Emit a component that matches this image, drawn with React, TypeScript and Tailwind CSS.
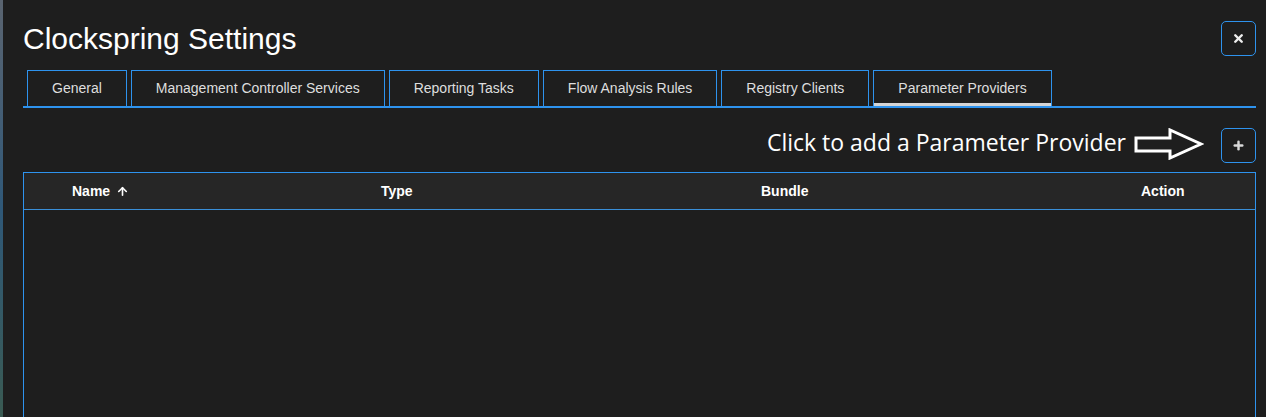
import React from 'react';
import { X, Plus, ArrowUp } from 'lucide-react';

const tabs = [
  'General',
  'Management Controller Services',
  'Reporting Tasks',
  'Flow Analysis Rules',
  'Registry Clients',
  'Parameter Providers',
];

const App: React.FC = () => {
  const [active, setActive] = React.useState('Parameter Providers');

  return (
    <div
      className="flex h-[417px] w-[1266px] overflow-hidden bg-[#1e1e1e]"
      style={{ fontFamily: '"Liberation Sans", Arial, sans-serif' }}
    >
      {/* blurred canvas peeking at the left edge */}
      <div className="w-[3px] shrink-0 bg-gradient-to-b from-[#5a6470] via-[#2f5878] to-[#3a5a52]" />

      <div className="flex flex-1 flex-col">
        <div className="h-[3px] bg-[#1a2430]" />

        <div className="flex flex-col pl-[20px] pr-[10px]">
          {/* title row */}
          <div className="mt-[21px] flex items-center justify-between">
            <h1 className="-mt-[1px] text-[30px] leading-[35px] text-white">Clockspring Settings</h1>
            <button className="flex h-[35px] w-[35px] items-center justify-center rounded-[5px] border-x-[1px] border-y-[1px] border-solid border-[#2e93ee] text-[#eeeeee]">
              <X size={13} strokeWidth={4.5} />
            </button>
          </div>

          {/* tabs */}
          <div className="mt-[14px] flex gap-[4px] border-b-2 border-[#2e93ee] pl-[4px]">
            {tabs.map((t) => (
              <button
                key={t}
                onClick={() => setActive(t)}
                className="relative h-[36px] border-x-[1px] border-t-[1px] border-solid border-[#2e93ee] px-[24px] text-[14px] text-[#dedede]"
              >
                {t}
                {active === t && (
                  <span className="absolute bottom-0 left-0 right-0 h-[3px] bg-[#d4d4d4]" />
                )}
              </button>
            ))}
          </div>

          {/* add row */}
          <div className="mt-[20px] flex items-center justify-end">
            <span
              className="-mt-[8px] text-[23px] leading-[30px] text-white"
              style={{ fontFamily: '"Open Sans", "Noto Sans", sans-serif' }}
            >
              Click to add a Parameter Provider
            </span>
            <svg width="72" height="32" viewBox="0 0 72 32" className="ml-[6px] -mt-[3px]">
              <path
                d="M4 10 H38 V2 L69 16 L38 30 V23 H4 Z"
                fill="none"
                stroke="#ffffff"
                strokeWidth="3"
                strokeLinejoin="miter"
              />
            </svg>
            <button className="ml-[17px] flex h-[35px] w-[35px] items-center justify-center rounded-[5px] border-x-[1px] border-y-[1px] border-solid border-[#2e93ee] text-[#d8d8d8]">
              <Plus size={13} strokeWidth={4.5} />
            </button>
          </div>

          {/* table */}
          <div className="mt-[9px] h-[300px] border-x-[1px] border-y-[1px] border-solid border-[#2e93ee]">
            <div className="grid h-[37px] grid-cols-[357px_380px_380px_1fr] items-center border-b-[1px] border-solid border-[#3a8fd8] bg-[#262626] text-[14px] font-bold text-white">
              <div className="flex items-center gap-[6px] pl-[48px]">
                Name <ArrowUp size={13} strokeWidth={3} />
              </div>
              <div>Type</div>
              <div>Bundle</div>
              <div>Action</div>
            </div>
            <div className="h-full bg-[#1e1e1e]" />
          </div>
        </div>
      </div>
    </div>
  );
};

export default App;
